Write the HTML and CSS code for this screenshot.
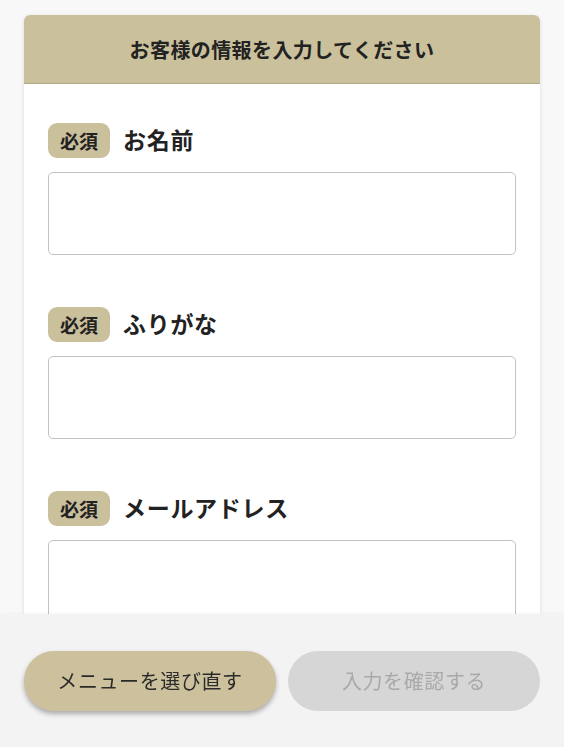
FILE: index.html
```html
<!DOCTYPE html>
<html lang="ja">
<head>
<meta charset="utf-8">
<link rel="stylesheet" href="styles.css">
</head>
<body>
<main class="page">
  <section class="card">
    <h1 class="card-title">お客様の情報を入力してください</h1>
    <div class="card-body">
      <div class="field">
        <div class="field-label"><span class="badge">必須</span><span class="label-text">お名前</span></div>
        <input class="input" type="text">
      </div>
      <div class="field">
        <div class="field-label"><span class="badge">必須</span><span class="label-text">ふりがな</span></div>
        <input class="input" type="text">
      </div>
      <div class="field">
        <div class="field-label"><span class="badge">必須</span><span class="label-text">メールアドレス</span></div>
        <input class="input" type="text">
      </div>
    </div>
  </section>
</main>
<footer class="footer">
  <button class="btn btn-back">メニューを選び直す</button>
  <button class="btn btn-confirm" disabled>入力を確認する</button>
</footer>
</body>
</html>
```

FILE: styles.css
```css
* { box-sizing: border-box; }
html, body { margin: 0; padding: 0; }
body {
  background: #f8f8f8;
  font-family: "Noto Sans CJK JP", "Noto Sans", sans-serif;
  color: #222;
  height: 747px;
  overflow: hidden;
}
.page {
  padding: 15px 24px 0;
}
.card {
  background: #fff;
  border-radius: 6px;
  box-shadow: 0 1px 4px rgba(0,0,0,0.12);
  overflow: hidden;
}
.card-title {
  margin: 0;
  height: 69px;
  background: #cbc09c;
  border-bottom: 1px solid #b1a887;
  display: flex;
  align-items: center;
  justify-content: center;
  font-size: 20px;
  font-weight: 700;
  letter-spacing: 0.4px;
  color: #222;
}
.card-body {
  padding: 39px 24px 200px;
  display: flex;
  flex-direction: column;
  gap: 52px;
}
.field {
  display: flex;
  flex-direction: column;
  gap: 14px;
}
.field-label {
  display: flex;
  align-items: center;
  gap: 13px;
}
.badge {
  background: #cbc09c;
  border-radius: 9px;
  height: 35px;
  padding: 0 12px;
  display: inline-flex;
  align-items: center;
  font-size: 19px;
  font-weight: 700;
  color: #222;
}
.label-text {
  font-size: 23px;
  font-weight: 700;
  letter-spacing: 0.7px;
  color: #222;
  position: relative;
  top: -2px;
}
.input {
  display: block;
  width: 100%;
  height: 83px;
  border: 1px solid #c2c2c2;
  border-radius: 5px;
  background: #fff;
  font: inherit;
}
.footer {
  position: fixed;
  left: 0;
  right: 0;
  bottom: 0;
  height: 133px;
  background: #f3f3f3;
  box-shadow: 0 -1px 2px rgba(0,0,0,0.03);
  display: flex;
  align-items: center;
  gap: 12px;
  padding: 0 24px;
}
.btn {
  flex: 1;
  height: 60px;
  border: none;
  border-radius: 30px;
  font-family: inherit;
  font-size: 20px;
  font-weight: 400;
  letter-spacing: 0.6px;
}
.btn-back {
  background: #ccc19c;
  color: #2a2a2a;
  box-shadow: 0 3px 5px rgba(0,0,0,0.3);
}
.btn-confirm {
  background: #d6d6d6;
  color: #a9a9a9;
}
```
